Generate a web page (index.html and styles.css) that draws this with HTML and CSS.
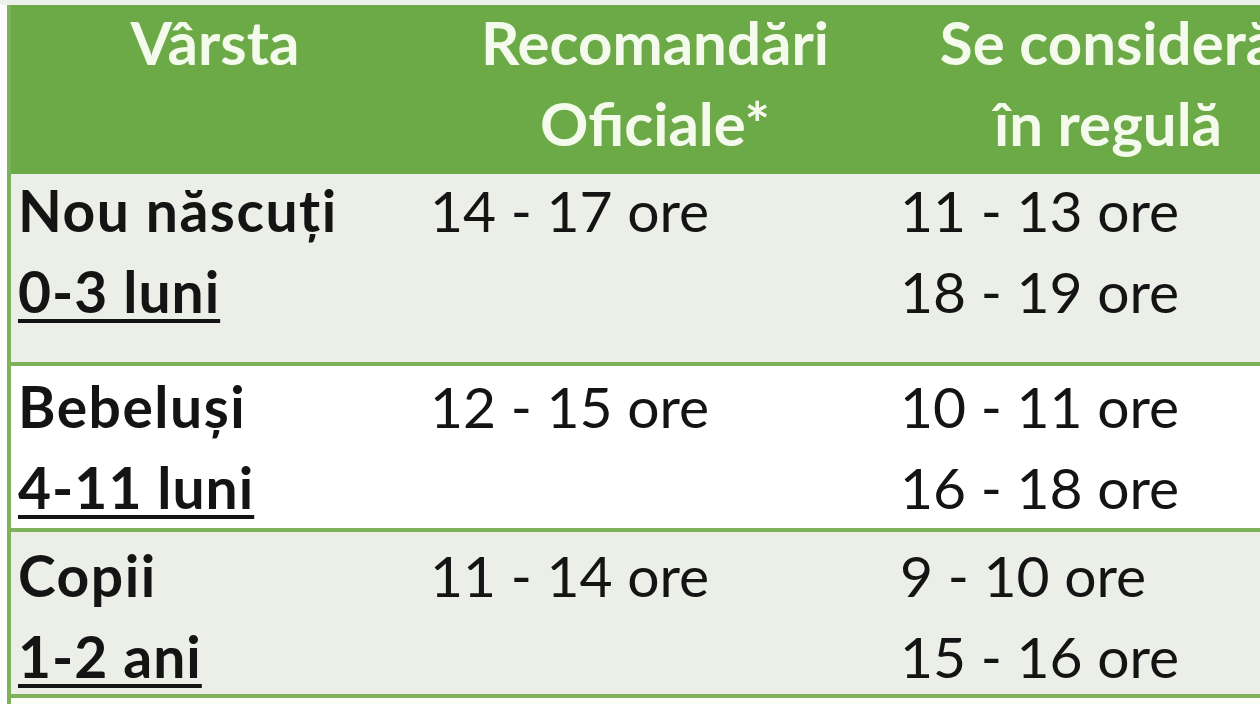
FILE: index.html
```html
<!DOCTYPE html>
<html lang="ro">
<head>
<meta charset="utf-8">
<title>Somn</title>
<link rel="stylesheet" href="styles.css">
</head>
<body>
<div class="sheet">
  <div class="table">
    <div class="row head">
      <div class="cell">Vârsta</div>
      <div class="cell">Recomandări<br>Oficiale*</div>
      <div class="cell">Se consideră<br>în regulă</div>
    </div>
    <div class="row r1 shade">
      <div class="cell age"><b>Nou născuți</b><br><u>0-3 luni</u></div>
      <div class="cell">14 - 17 ore</div>
      <div class="cell">11 - 13 ore<br>18 - 19 ore</div>
    </div>
    <div class="row r2">
      <div class="cell age"><b>Bebeluși</b><br><u>4-11 luni</u></div>
      <div class="cell">12 - 15 ore</div>
      <div class="cell">10 - 11 ore<br>16 - 18 ore</div>
    </div>
    <div class="row r3 shade">
      <div class="cell age"><b>Copii</b><br><u>1-2 ani</u></div>
      <div class="cell">11 - 14 ore</div>
      <div class="cell">9 - 10 ore<br>15 - 16 ore</div>
    </div>
    <div class="row r4">
      <div class="cell"></div>
      <div class="cell"></div>
      <div class="cell"></div>
    </div>
  </div>
</div>
</body>
</html>
```

FILE: styles.css
```css
html, body {
  margin: 0;
  padding: 0;
  width: 1260px;
  height: 709px;
  overflow: hidden;
  background: #ffffff;
}

.sheet {
  padding: 5px 0 0 7px;
  background: linear-gradient(#eef0ec 0 5px, #ffffff 5px);
  height: 704px;
  box-sizing: border-box;
  overflow: hidden;
}

.table {
  border-left: 4px solid #7db25a;
  width: 1249px;
  overflow: hidden;
  font-family: "Lato", "Open Sans", sans-serif;
  font-size: 57px;
  line-height: 81px;
  color: #141414;
}

.row {
  display: grid;
  grid-template-columns: 408px 472px 434px;
  border-bottom: 4px solid #7db25a;
}

.cell {
  padding-left: 7px;
  white-space: nowrap;
}

.row .cell:nth-child(2) { padding-left: 11px; }
.row .cell:nth-child(3) { padding-left: 9px; }

.head {
  background: #6baa46;
  color: #f4faec;
  font-weight: 700;
  height: 167px;
  border-bottom: 2px solid #6baa46;
  font-size: 60px;
}

.head .cell {
  text-align: center;
  padding: 0;
  margin-top: -3px;
}

.head .cell:nth-child(2),
.head .cell:nth-child(3) {
  padding: 0;
}

.shade { background: #ebefe7; }

.r1 { height: 188px; }
.r1 .cell { margin-top: -4px; }
.r2 { height: 162px; }
.r3 { height: 162px; }
.r3 .cell { padding-top: 3px; }
.r4 { background: #fbfdf6; border-bottom: none; height: 20px; }

.age b {
  font-weight: 700;
  letter-spacing: 1.5px;
}
.age u {
  font-weight: 700;
  letter-spacing: 1px;
  text-decoration-thickness: 4px;
  text-underline-offset: 6px;
}
```
